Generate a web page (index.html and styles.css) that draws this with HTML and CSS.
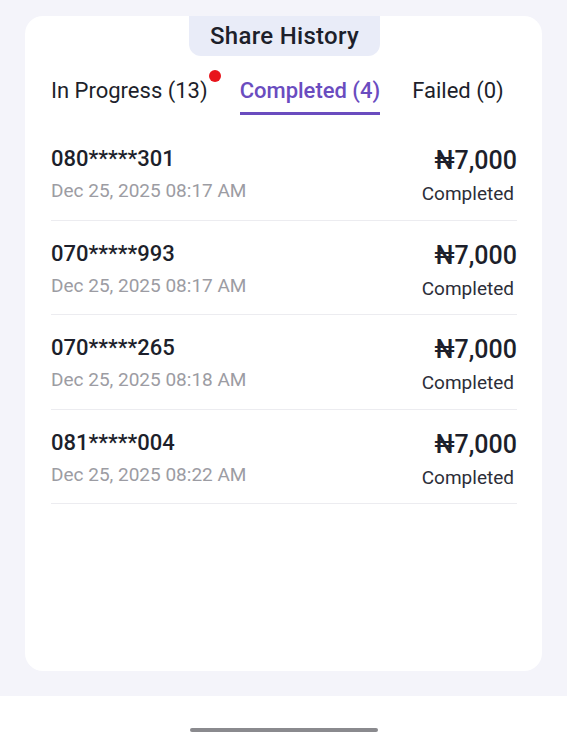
FILE: index.html
```html
<!DOCTYPE html>
<html>
	<head>
		<meta charset="utf-8">
		<title>Share History</title>
		<link rel="stylesheet" href="styles.css">
	</head>
	<body>
		<div class="screen">
			<div class="card">
				<div class="title">Share History</div>
				<div class="tabs">
					<div class="tab">In Progress (13)<span class="dot"></span></div>
					<div class="tab active">Completed (4)</div>
					<div class="tab">Failed (0)</div>
				</div>
				<div class="list">
					<div class="row">
						<div class="left">
							<div class="phone">080*****301</div>
							<div class="date">Dec 25, 2025 08:17 AM</div>
						</div>
						<div class="right">
							<div class="amount">₦7,000</div>
							<div class="status">Completed</div>
						</div>
					</div>
					<div class="row">
						<div class="left">
							<div class="phone">070*****993</div>
							<div class="date">Dec 25, 2025 08:17 AM</div>
						</div>
						<div class="right">
							<div class="amount">₦7,000</div>
							<div class="status">Completed</div>
						</div>
					</div>
					<div class="row">
						<div class="left">
							<div class="phone">070*****265</div>
							<div class="date">Dec 25, 2025 08:18 AM</div>
						</div>
						<div class="right">
							<div class="amount">₦7,000</div>
							<div class="status">Completed</div>
						</div>
					</div>
					<div class="row">
						<div class="left">
							<div class="phone">081*****004</div>
							<div class="date">Dec 25, 2025 08:22 AM</div>
						</div>
						<div class="right">
							<div class="amount">₦7,000</div>
							<div class="status">Completed</div>
						</div>
					</div>
				</div>
			</div>
		</div>
		<div class="navbar">
			<div class="handle"></div>
		</div>
	</body>
</html>
```

FILE: styles.css
```css
html, body {
	margin: 0;
}
body {
	font-family: Roboto, "Noto Sans", sans-serif;
	color: #1d1f2b;
	background: #ffffff;
}

.screen {
	height: 696px;
	box-sizing: border-box;
	padding: 16px 25px 25px;
	background: #f4f4fa;
}

.card {
	height: 100%;
	box-sizing: border-box;
	background: #ffffff;
	border-radius: 18px;
	padding: 0 25px 0 26px;
	display: flex;
	flex-direction: column;
}

.title {
	align-self: center;
	width: 191px;
	height: 40px;
	line-height: 40px;
	text-align: center;
	font-size: 24px;
	font-weight: 500;
	letter-spacing: 0.3px;
	background: #e9ecf8;
	border-radius: 0 0 12px 12px;
	margin-left: 1px;
}

.tabs {
	display: flex;
	gap: 32px;
	margin-top: 22px;
}
.tab {
	position: relative;
	font-size: 22px;
	line-height: 26px;
	padding-bottom: 8px;
	border-bottom: 3px solid transparent;
}
.tab.active {
	color: #6a4cbf;
	font-weight: 500;
	border-bottom-color: #6a4cbf;
}
.dot {
	position: absolute;
	top: -8px;
	right: -13px;
	width: 12px;
	height: 12px;
	border-radius: 50%;
	background: #e8141b;
}

.list {
	margin-top: 11px;
}
.row {
	height: 94.5px;
	box-sizing: border-box;
	display: flex;
	justify-content: space-between;
	align-items: flex-start;
	padding-top: 20px;
	border-bottom: 1px solid #ececf0;
}
.phone {
	font-size: 22px;
	line-height: 26px;
	font-weight: 500;
}
.date {
	margin-top: 8px;
	font-size: 19px;
	line-height: 22px;
	color: #9c9ca3;
}
.right {
	text-align: right;
}
.amount {
	font-size: 25px;
	line-height: 30px;
	font-weight: 500;
}
.status {
	margin-top: 7px;
	font-size: 19px;
	line-height: 22px;
	color: #2c2e38;
	padding-right: 3px;
}

.navbar {
	height: 47px;
	display: flex;
	justify-content: center;
	align-items: center;
	background: #ffffff;
}
.handle {
	width: 188px;
	height: 4px;
	border-radius: 2px;
	background: #8a8a8e;
	margin-top: 21px;
}
```
